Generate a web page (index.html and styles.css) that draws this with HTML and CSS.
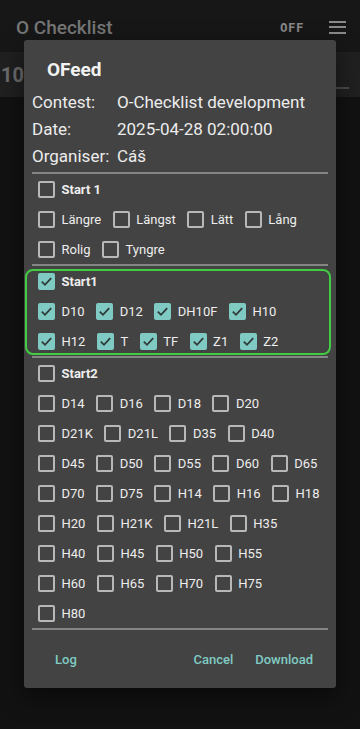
FILE: index.html
```html
<!DOCTYPE html>
<html lang="sv">
<head>
    <meta charset="UTF-8">
    <meta name="viewport" content="width=device-width, initial-scale=1.0">
    <title>O Checklist</title>
    <link rel="stylesheet" href="styles.css">
</head>
<body>

    <div class="appbar">
        <span class="app-title">O Checklist</span>
        <span class="status">OFF</span>
        <span class="menu"><i></i><i></i><i></i></span>
    </div>
    <div class="tabs">
        <span class="tab-num">10</span>
        <span class="tab-line"></span>
    </div>
    <main class="content"></main>

    <div class="dialog">
        <h2 class="dlg-title">OFeed</h2>
        <div class="dlg-body">
            <div class="info">
                <span>Contest:</span><span>O-Checklist development</span>
                <span>Date:</span><span>2025-04-28 02:00:00</span>
                <span>Organiser:</span><span>Cáš</span>
            </div>
            <hr class="sep">

            <section class="group">
                <div class="row"><label class="cb head"><span class="box"></span>Start 1</label></div>
                <div class="row">
                    <label class="cb"><span class="box"></span>Längre</label>
                    <label class="cb"><span class="box"></span>Längst</label>
                    <label class="cb"><span class="box"></span>Lätt</label>
                    <label class="cb"><span class="box"></span>Lång</label>
                </div>
                <div class="row">
                    <label class="cb"><span class="box"></span>Rolig</label>
                    <label class="cb"><span class="box"></span>Tyngre</label>
                </div>
            </section>
            <hr class="sep">

            <!-- markerad grupp -->
            <section class="group hl">
                <div class="row"><label class="cb head"><span class="box on"><svg viewBox="0 0 17 17"><path d="M3.8 8.6l3.2 3.2 6.2-6.6"/></svg></span>Start1</label></div>
                <div class="row">
                    <label class="cb"><span class="box on"><svg viewBox="0 0 17 17"><path d="M3.8 8.6l3.2 3.2 6.2-6.6"/></svg></span>D10</label>
                    <label class="cb"><span class="box on"><svg viewBox="0 0 17 17"><path d="M3.8 8.6l3.2 3.2 6.2-6.6"/></svg></span>D12</label>
                    <label class="cb"><span class="box on"><svg viewBox="0 0 17 17"><path d="M3.8 8.6l3.2 3.2 6.2-6.6"/></svg></span>DH10F</label>
                    <label class="cb"><span class="box on"><svg viewBox="0 0 17 17"><path d="M3.8 8.6l3.2 3.2 6.2-6.6"/></svg></span>H10</label>
                </div>
                <div class="row">
                    <label class="cb"><span class="box on"><svg viewBox="0 0 17 17"><path d="M3.8 8.6l3.2 3.2 6.2-6.6"/></svg></span>H12</label>
                    <label class="cb"><span class="box on"><svg viewBox="0 0 17 17"><path d="M3.8 8.6l3.2 3.2 6.2-6.6"/></svg></span>T</label>
                    <label class="cb"><span class="box on"><svg viewBox="0 0 17 17"><path d="M3.8 8.6l3.2 3.2 6.2-6.6"/></svg></span>TF</label>
                    <label class="cb"><span class="box on"><svg viewBox="0 0 17 17"><path d="M3.8 8.6l3.2 3.2 6.2-6.6"/></svg></span>Z1</label>
                    <label class="cb"><span class="box on"><svg viewBox="0 0 17 17"><path d="M3.8 8.6l3.2 3.2 6.2-6.6"/></svg></span>Z2</label>
                </div>
            </section>
            <hr class="sep">

            <section class="group">
                <div class="row"><label class="cb head"><span class="box"></span>Start2</label></div>
                <div class="row">
                    <label class="cb"><span class="box"></span>D14</label>
                    <label class="cb"><span class="box"></span>D16</label>
                    <label class="cb"><span class="box"></span>D18</label>
                    <label class="cb"><span class="box"></span>D20</label>
                </div>
                <div class="row">
                    <label class="cb"><span class="box"></span>D21K</label>
                    <label class="cb"><span class="box"></span>D21L</label>
                    <label class="cb"><span class="box"></span>D35</label>
                    <label class="cb"><span class="box"></span>D40</label>
                </div>
                <div class="row">
                    <label class="cb"><span class="box"></span>D45</label>
                    <label class="cb"><span class="box"></span>D50</label>
                    <label class="cb"><span class="box"></span>D55</label>
                    <label class="cb"><span class="box"></span>D60</label>
                    <label class="cb"><span class="box"></span>D65</label>
                </div>
                <div class="row">
                    <label class="cb"><span class="box"></span>D70</label>
                    <label class="cb"><span class="box"></span>D75</label>
                    <label class="cb"><span class="box"></span>H14</label>
                    <label class="cb"><span class="box"></span>H16</label>
                    <label class="cb"><span class="box"></span>H18</label>
                </div>
                <div class="row">
                    <label class="cb"><span class="box"></span>H20</label>
                    <label class="cb"><span class="box"></span>H21K</label>
                    <label class="cb"><span class="box"></span>H21L</label>
                    <label class="cb"><span class="box"></span>H35</label>
                </div>
                <div class="row">
                    <label class="cb"><span class="box"></span>H40</label>
                    <label class="cb"><span class="box"></span>H45</label>
                    <label class="cb"><span class="box"></span>H50</label>
                    <label class="cb"><span class="box"></span>H55</label>
                </div>
                <div class="row">
                    <label class="cb"><span class="box"></span>H60</label>
                    <label class="cb"><span class="box"></span>H65</label>
                    <label class="cb"><span class="box"></span>H70</label>
                    <label class="cb"><span class="box"></span>H75</label>
                </div>
                <div class="row">
                    <label class="cb"><span class="box"></span>H80</label>
                </div>
            </section>
            <hr class="sep">
        </div>
        <div class="actions">
            <button class="btn">Log</button>
            <span class="spacer"></span>
            <button class="btn cancel">Cancel</button>
            <button class="btn">Download</button>
        </div>
    </div>

</body>
</html>
```

FILE: styles.css
```css
body {
    margin: 0;
    height: 729px;
    overflow: hidden;
    position: relative;
    background: #121212;
    font-family: Roboto, "Noto Sans", sans-serif;
}
.appbar {
    height: 52px;
    background: #171717;
    display: flex;
    align-items: center;
    padding: 2px 14px 0 16px;
    box-sizing: border-box;
}
.app-title {
    flex: 1;
    font-size: 19px;
    font-weight: 500;
    color: #777;
}
.status {
    font-family: "DejaVu Sans Mono", monospace;
    font-weight: bold;
    font-size: 12.5px;
    letter-spacing: 0.5px;
    color: #888;
    margin-right: 25px;
}
.menu {
    display: flex;
    flex-direction: column;
    gap: 3.5px;
    width: 17px;
}
.menu i {
    height: 2px;
    background: #8a8a8a;
}
.tabs {
    height: 45px;
    background: #202020;
    display: flex;
    align-items: center;
}
.tab-num {
    font-size: 20px;
    font-weight: bold;
    color: #6d6d6d;
    margin-left: 1px;
}
.tab-line {
    margin-left: auto;
    margin-right: 11px;
    margin-bottom: 8px;
    align-self: flex-end;
    width: 19px;
    height: 2px;
    background: #4a4a4a;
}

/* dialogen ligger ovanpå appen */
.dialog {
    position: absolute;
    left: 24px;
    top: 40px;
    width: 312px;
    background: #434343;
    border-radius: 3px;
    box-shadow: 0 8px 24px rgba(0, 0, 0, 0.5);
}
.dlg-title {
    margin: 0;
    padding: 18px 0 0 23px;
    font-size: 19px;
    line-height: 24px;
    font-weight: bold;
    color: #f2f2f2;
}
.dlg-body {
    padding: 7px 8px 0;
}
.info {
    display: grid;
    grid-template-columns: 85px 1fr;
    font-size: 17px;
    line-height: 27px;
    color: #ececec;
    margin-bottom: 2px;
}
.sep {
    height: 2px;
    margin: 0;
    border: 0;
    background: #858585;
}
.group {
    position: relative;
}
.group.hl::before {
    content: "";
    position: absolute;
    left: -7px;
    right: -3px;
    top: 3px;
    bottom: 1px;
    border: 2px solid #41cc41;
    border-radius: 8px;
    pointer-events: none;
}
.row {
    display: flex;
    align-items: center;
    height: 30px;
    padding-left: 6px;
    gap: 11.5px;
}
.cb {
    display: flex;
    align-items: center;
    gap: 6.5px;
    font-size: 13px;
    color: #eee;
}
.cb.head {
    font-weight: bold;
}
.box {
    width: 17px;
    height: 17px;
    box-sizing: border-box;
    border: 2px solid #b8b8b8;
    border-radius: 2px;
}
.box.on {
    border: none;
    background: #7fcbc4;
}
.box svg {
    display: block;
    width: 17px;
    height: 17px;
}
.box svg path {
    fill: none;
    stroke: #2f3a39;
    stroke-width: 1.8;
}
.actions {
    display: flex;
    align-items: center;
    height: 58px;
    padding: 0 23px 0 31px;
}
.spacer {
    flex: 1;
}
.btn {
    padding: 0;
    border: none;
    background: none;
    font-family: inherit;
    font-size: 13px;
    font-weight: 500;
    color: #80cbc4;
}
.btn.cancel {
    margin-right: 22px;
}
```
